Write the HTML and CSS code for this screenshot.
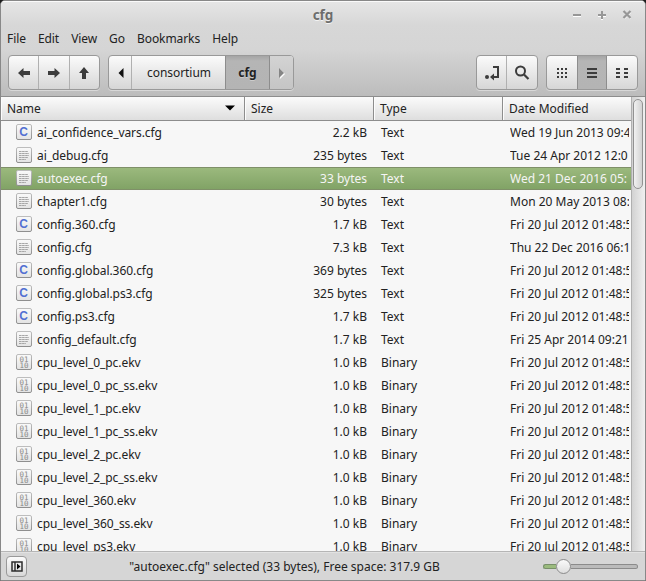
FILE: index.html
```html
<!DOCTYPE html>
<html lang="en">
<head>
<meta charset="utf-8">
<title>cfg</title>
<link rel="stylesheet" href="styles.css">
</head>
<body>
<svg class="defs" aria-hidden="true">
  <defs>
    <linearGradient id="paper" x1="0" y1="0" x2="0" y2="1"><stop offset="0" stop-color="#fafafa"/><stop offset="1" stop-color="#e3e3e3"/></linearGradient>
    <linearGradient id="edge" x1="0" y1="0" x2="0" y2="1"><stop offset="0" stop-color="#bdbdbd"/><stop offset="1" stop-color="#8f8f8f"/></linearGradient>
  </defs>
  <symbol id="sheet" viewBox="0 0 16 16"><rect x=".5" y=".5" width="15" height="15" rx="1.5" fill="url(#paper)" stroke="url(#edge)"/></symbol>
  <symbol id="code" viewBox="0 0 16 16"><use href="#sheet"/><text x="7.6" y="12" class="glyph-c">C</text></symbol>
  <symbol id="text" viewBox="0 0 16 16"><use href="#sheet"/><path d="M3 4.500h9M3 6.500h10M3 8.500h10M3 10.500h9M3 12.500h7" stroke="#a5a5a5" stroke-dasharray="2.6 .5"/></symbol>
  <symbol id="bin" viewBox="0 0 16 16"><use href="#sheet"/><text x="8" y="7.500" class="glyph-b">01</text><text x="8" y="14" class="glyph-b">10</text></symbol>
</svg>
<div class="window">
  <header class="chrome">
    <div class="titlebar">
      <h1>cfg</h1>
      <svg class="controls" width="60" height="14" viewBox="0 0 60 14"><g fill="none" stroke="#fff" stroke-width="2" transform="translate(0 1)"><path d="M1 7h8M26 7h8M30 3v8"/><path d="M52 3l6.500 6.500M58.500 3L52 9.500"/></g><g fill="none" stroke="#979797" stroke-width="2"><path d="M1 7h8M26 7h8M30 3v8"/><path d="M51.500 3l7 7M58.500 3l-7 7" stroke-width="2.300"/></g></svg>
    </div>
    <nav class="menu"><span>File</span><span>Edit</span><span>View</span><span>Go</span><span>Bookmarks</span><span>Help</span></nav>
    <div class="toolbar">
      <div class="group nav">
        <button aria-label="Back"><svg width="14" height="14" viewBox="0 0 14 14"><path d="M1 7l5.500-5v3H13v4H6.500v3z"/></svg></button>
        <button aria-label="Forward"><svg width="14" height="14" viewBox="0 0 14 14"><path d="M13 7L7.500 2v3H1v4h6.500v3z"/></svg></button>
        <button aria-label="Up"><svg width="14" height="14" viewBox="0 0 14 14"><path d="M7 1l5 6H9v6H5V7H2z"/></svg></button>
      </div>
      <div class="group path">
        <button class="prev" aria-label="Previous"><svg width="6" height="10" viewBox="0 0 6 10"><path d="M5.500 0v10L.5 5z"/></svg></button>
        <button class="crumb">consortium</button>
        <button class="current">cfg</button>
        <button class="next" aria-label="Next"><svg width="7" height="12" viewBox="0 0 7 12"><path d="M2 2v10l5-5z" fill="#fff"/><path d="M1 1v10l5-5z" fill="#858585"/></svg></button>
      </div>
      <div class="group tools">
        <button aria-label="Location"><svg width="16" height="16" viewBox="0 0 16 16"><circle cx="3" cy="12" r="2"/><path d="M9 2h5v10H9" fill="none" stroke="#3c3c3c" stroke-width="2"/><path d="M6 12l4-3.500v7z"/></svg></button>
        <button aria-label="Search"><svg width="16" height="16" viewBox="0 0 16 16"><circle cx="6.500" cy="6" r="4.500" fill="none" stroke="#3c3c3c" stroke-width="2"/><path d="M10 9.500l4.500 4.500" stroke="#3c3c3c" stroke-width="2.200"/></svg></button>
      </div>
      <div class="group views">
        <button aria-label="Icons"><svg width="12" height="12" viewBox="0 0 12 12"><path d="M1 2h10M1 6h10M1 10h10" stroke="#3c3c3c" stroke-width="2" stroke-dasharray="2 2"/></svg></button>
        <button class="on" aria-label="List"><svg width="12" height="12" viewBox="0 0 12 12"><path d="M1 2h10M1 6h10M1 10h10" stroke="#3c3c3c" stroke-width="2"/></svg></button>
        <button aria-label="Compact"><svg width="14" height="12" viewBox="0 0 14 12"><path d="M1 2h12M1 6h12M1 10h12" stroke="#3c3c3c" stroke-width="2" stroke-dasharray="4 4"/></svg></button>
      </div>
    </div>
  </header>
  <main class="content">
    <div class="list">
      <div class="head"><span>Name<svg width="10" height="6" viewBox="0 0 10 6"><path d="M0 .5h10L5 5.500z"/></svg></span><span>Size</span><span>Type</span><span>Date Modified</span></div>
      <div class="rows" id="rows"></div>
    </div>
    <div class="scrollbar"><div class="thumb"></div></div>
  </main>
  <footer class="status">
    <button class="panel" aria-label="Toggle sidebar"><svg width="12" height="11" viewBox="0 0 12 11"><rect x="1" y="1" width="10" height="9" fill="none" stroke="#2c2c2c" stroke-width="1.500"/><path d="M4 1v9" stroke="#2c2c2c" stroke-width="1.400"/><path d="M6 2.500v6l3.500-3z"/></svg></button>
    <p>"autoexec.cfg" selected (33 bytes), Free space: 317.9 GB</p>
    <div class="slider"><div class="fill"></div><div class="knob"></div><div class="rest"></div></div>
  </footer>
</div>
<script src="files.js"></script>
</body>
</html>
```
FILE: styles.css
```css
* { box-sizing: border-box; }
body { margin: 0; background: #1c1c1c; font: 12px/17px "Noto Sans", sans-serif; color: #222; overflow: hidden; }
.defs { position: absolute; width: 0; height: 0; overflow: hidden; }
.window { display: flex; flex-direction: column; width: 646px; height: 581px; border: 1px solid #888; border-radius: 5px 5px 0 0; overflow: hidden; background: #d6d6d6; }
.chrome { flex: none; height: 96px; background: linear-gradient(#e6e6e6, #d7d7d7 24px, #d5d5d5 48px, #bcbcbc 95px); border-bottom: 1px solid #8d8d8d; box-shadow: inset 0 1px #fafafa; }
.titlebar { display: grid; grid-template-columns: 1fr auto 1fr; align-items: center; height: 27px; padding-right: 13px; padding-left: 13px; }
h1 { grid-column: 2; margin: 1px 0 0; font-size: 13.500px; line-height: 18px; color: #6c6c6c; text-shadow: 0 1px #f4f4f4; }
.controls { justify-self: end; margin-top: 0; }
.menu { display: flex; gap: 12px; height: 27px; padding: 2px 6px 0; line-height: 18px; letter-spacing: -.07px; }
.toolbar { display: flex; padding: 0 7px; }
.group { display: flex; height: 35px; border: 1px solid #999; border-radius: 4px; background: linear-gradient(#fbfbfb, #d6d6d6); box-shadow: 0 1px rgba(255,255,255,.4); overflow: hidden; }
button { display: flex; align-items: center; justify-content: center; padding: 0; border: 0; font: inherit; color: inherit; background: none; }
.group button { flex: 1; border-left: 1px solid #b0b0b0; }
.group button:first-child { border-left: 0; }
.group svg { fill: #3c3c3c; }
.nav { width: 92px; }
.path { width: 186px; margin-left: 8px; }
.path .prev { flex: 0 0 22px; padding-left: 1px; }
.path .prev svg { fill: #111; }
.path .crumb { flex: 0 0 94px; padding-left: 1px; letter-spacing: -.07px; }
.path .current { flex: 0 0 45px; font-weight: bold; }
.path .current, .views .on { background: linear-gradient(#a5a5a5, #b5b5b5 5px, #b4b4b4); border-left-color: #8d8d8d; border-right: 1px solid #8d8d8d; text-shadow: 0 1px #ccc; }
.path .next { background: linear-gradient(#d3d3d3, #c5c5c5); border-left: 0; }
.tools { width: 62px; margin-left: auto; }
.tools button:first-child { flex: 0 0 29px; }
.views { width: 92px; margin-left: 8px; }
.views button { flex: 0 0 30px; }
.views button:last-child { border-left: 0; }
.content { display: flex; flex: 1; min-height: 0; background: #f7f7f7; }
.list { display: flex; flex-direction: column; width: 630px; min-height: 0; }
.head, .row { display: grid; grid-template-columns: 243px 129px 129px 129px; }
.head { flex: none; height: 24px; background: linear-gradient(#fbfbfb, #dedede); border-bottom: 1px solid #8d8d8d; }
.head span { display: flex; align-items: center; justify-content: space-between; padding: 0 9px 1px 6px; border-left: 1px solid #8d8d8d; box-shadow: inset 1px 0 #fcfcfc; white-space: nowrap; }
.head span:first-child { border-left: 0; }
.rows { flex: 1; min-height: 0; overflow: hidden; }
.row { height: 23px; align-items: center; white-space: nowrap; }
.row span { overflow: hidden; }
.row .name { display: flex; gap: 5px; padding-left: 15px; letter-spacing: -.06px; }
.row svg { flex: none; width: 16px; height: 16px; letter-spacing: 0; }
.row .size { padding-right: 6px; text-align: right; }
.row .type { padding-left: 8px; }
.row .date { margin-left: 8px; margin-right: 2px; }
.row.selected { border: solid #7f9068; border-width: 1px 0; background: linear-gradient(#9bb97d, #81a366); color: #f5f5f5; }
.glyph-c { font: bold 12px "Liberation Sans", sans-serif; fill: #5270d2; text-anchor: middle; }
.glyph-b { font: 7.500px "DejaVu Sans Mono", monospace; fill: #888; text-anchor: middle; }
.scrollbar { width: 14px; padding: 2px 1px 0; border-left: 1px solid #b0b0b0; background: linear-gradient(90deg, #d2d2d2, #f0f0f0); }
.thumb { width: 10px; height: 90px; border: 1px solid #929292; border-radius: 5px; background: linear-gradient(90deg, #f1f1f1, #d2d2d2); }
.status { display: grid; grid-template-columns: 22px 1fr 95px; align-items: center; flex: none; height: 29px; padding: 0 7px 0 5px; border-top: 1px solid #b5b5b5; box-shadow: inset 0 1px #e2e2e2; }
.status p { margin: 0; padding-right: 2px; text-align: center; }
.panel { width: 21px; height: 21px; border: 1px solid #999; border-radius: 4px; background: linear-gradient(#fbfbfb, #d8d8d8); }
.slider { display: flex; align-items: center; width: 95px; }
.fill, .rest { height: 5px; border: 1px solid #8b8b8b; }
.fill { width: 13px; background: #9bbb7e; border-color: #78906a; border-right: 0; border-radius: 3px 0 0 3px; }
.rest { flex: 1; background: #bbb; border-left: 0; border-radius: 0 3px 3px 0; }
.knob { width: 15px; height: 15px; border: 1px solid #8b8b8b; border-radius: 50%; background: linear-gradient(#fafafa, #dedede); }
```
FILE: files.js
```js
const jul = "Fri 20 Jul 2012 01:48:5";
const files = [
  ["code", "ai_confidence_vars.cfg", "2.2 kB", "Wed 19 Jun 2013 09:4"],
  ["text", "ai_debug.cfg", "235 bytes", "Tue 24 Apr 2012 12:0"],
  ["text", "autoexec.cfg", "33 bytes", "Wed 21 Dec 2016 05:"],
  ["text", "chapter1.cfg", "30 bytes", "Mon 20 May 2013 08:"],
  ["code", "config.360.cfg", "1.7 kB", jul],
  ["text", "config.cfg", "7.3 kB", "Thu 22 Dec 2016 06:1"],
  ["code", "config.global.360.cfg", "369 bytes", jul],
  ["code", "config.global.ps3.cfg", "325 bytes", jul],
  ["code", "config.ps3.cfg", "1.7 kB", jul],
  ["text", "config_default.cfg", "1.7 kB", "Fri 25 Apr 2014 09:21"],
  ...["0_pc", "0_pc_ss", "1_pc", "1_pc_ss", "2_pc", "2_pc_ss", "360", "360_ss", "ps3"]
    .map(n => ["bin", `cpu_level_${n}.ekv`, "1.0 kB", jul])
];
document.getElementById("rows").innerHTML = files.map(([icon, name, size, date], i) =>
  `<div class="row${i === 2 ? " selected" : ""}">
    <span class="name"><svg><use href="#${icon}"/></svg>${name}</span>
    <span class="size">${size}</span>
    <span class="type">${icon === "bin" ? "Binary" : "Text"}</span>
    <span class="date">${date}</span>
  </div>`).join("");
```
